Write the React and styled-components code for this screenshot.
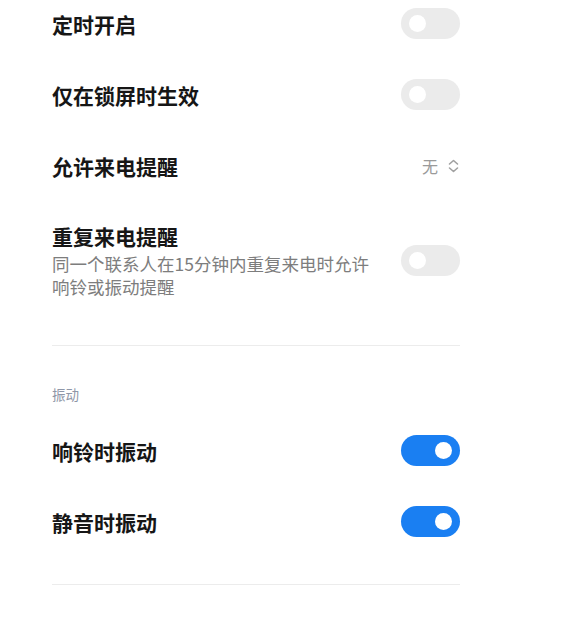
import styled, { createGlobalStyle } from 'styled-components';

const GlobalStyle = createGlobalStyle`
  body {
    margin: 0;
    background: #ffffff;
    font-family: "Noto Sans CJK SC", "Noto Sans", sans-serif;
  }
`;

const Page = styled.div`
  width: 408px;
  padding-left: 52px;
  margin-top: -12px;
`;

const Row = styled.div`
  display: flex;
  align-items: center;
  justify-content: space-between;
  min-height: ${(p) => (p.$tall ? 'auto' : '71px')};
  padding: ${(p) => (p.$tall ? '21px 0 22px' : '0')};
`;

const TextCol = styled.div`
  display: flex;
  flex-direction: column;
  gap: 2px;
`;

const Title = styled.div`
  font-size: 21px;
  line-height: 28px;
  font-weight: 700;
  color: #161616;
`;

const Sub = styled.div`
  font-size: 17.5px;
  line-height: 23px;
  color: #7d7d7d;
  width: 326px;
`;

const Switch = styled.div`
  flex: none;
  width: 59px;
  height: 31px;
  border-radius: 16px;
  background: ${(p) => (p.$on ? '#1a7ff2' : '#ebebeb')};
  display: flex;
  align-items: center;
  justify-content: ${(p) => (p.$on ? 'flex-end' : 'flex-start')};
  padding: 0 8px;
  box-sizing: border-box;

  &::after {
    content: '';
    width: 17px;
    height: 17px;
    border-radius: 50%;
    background: #ffffff;
  }
`;

const Picker = styled.div`
  display: flex;
  align-items: center;
  gap: 9px;
  font-size: 16px;
  color: #9a9a9a;
`;

const Divider = styled.hr`
  border: none;
  height: 1px;
  background: #ececec;
  margin: ${(p) => p.$top}px 0 0;
`;

const SectionHead = styled.div`
  font-size: 13.5px;
  line-height: 20px;
  color: #8f97a8;
  margin: 38px 0 11px;
`;

const Chevrons = () => (
  <svg width="13" height="14" viewBox="0 0 13 14" fill="none" stroke="#a0a0a0" strokeWidth="1.6" strokeLinecap="round" strokeLinejoin="round">
    <path d="M2.5 5 6.5 1.5 10.5 5" />
    <path d="M2.5 9 6.5 12.5 10.5 9" />
  </svg>
);

export default function App() {
  return (
    <>
      <GlobalStyle />
      <Page>
        <Row>
          <Title>定时开启</Title>
          <Switch />
        </Row>
        <Row>
          <Title>仅在锁屏时生效</Title>
          <Switch />
        </Row>
        <Row>
          <Title>允许来电提醒</Title>
          <Picker>
            无<Chevrons />
          </Picker>
        </Row>
        <Row $tall>
          <TextCol>
            <Title>重复来电提醒</Title>
            <Sub>同一个联系人在15分钟内重复来电时允许响铃或振动提醒</Sub>
          </TextCol>
          <Switch />
        </Row>
        <Divider $top={25} />
        <SectionHead>振动</SectionHead>
        <Row>
          <Title>响铃时振动</Title>
          <Switch $on />
        </Row>
        <Row>
          <Title>静音时振动</Title>
          <Switch $on />
        </Row>
        <Divider $top={27} />
      </Page>
    </>
  );
}
